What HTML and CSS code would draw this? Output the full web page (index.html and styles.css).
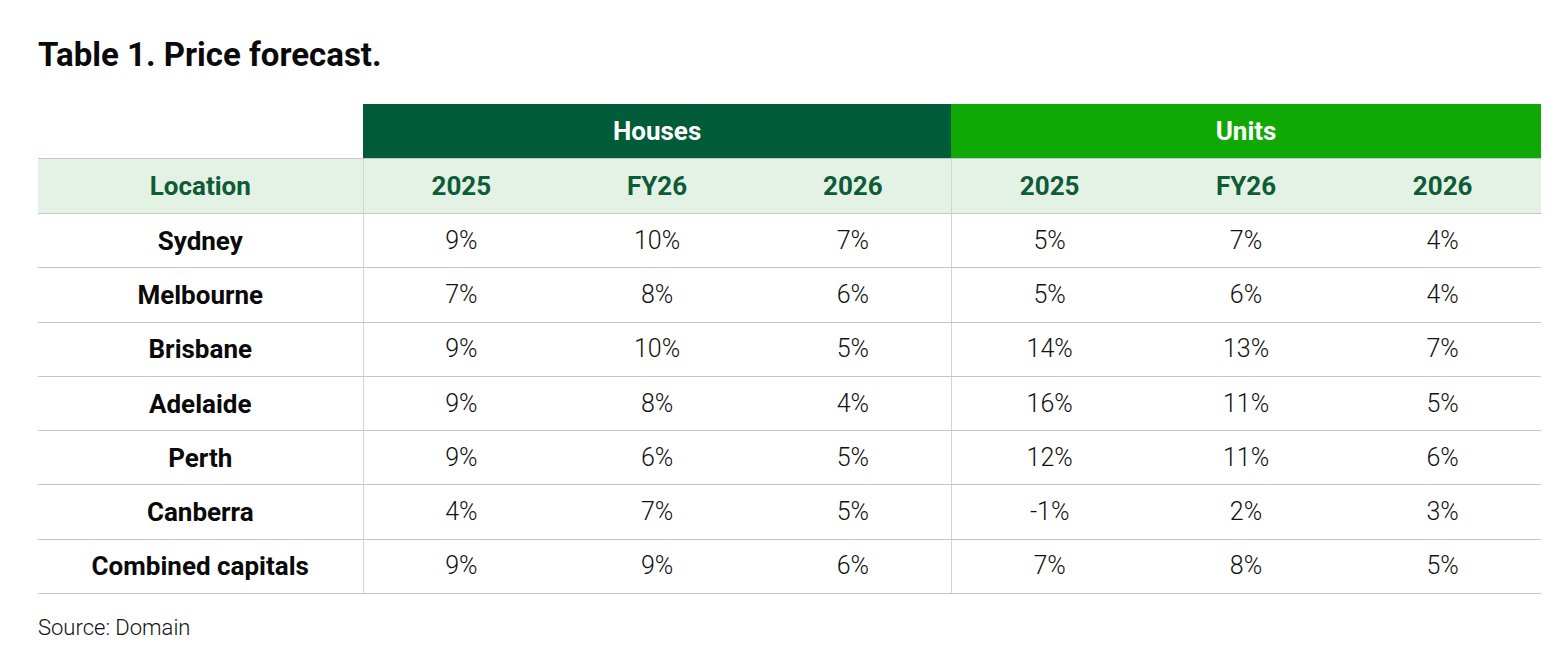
FILE: index.html
```html
<!DOCTYPE html>
<html lang="en">
<head>
<meta charset="utf-8">
<title>Table 1. Price forecast.</title>
<link rel="stylesheet" href="styles.css">
</head>
<body>
<div class="wrap">
  <h2 class="title">Table 1. Price forecast.</h2>
  <table class="forecast">
    <colgroup>
      <col class="c-loc">
      <col class="c-h"><col class="c-h"><col class="c-h">
      <col class="c-u"><col class="c-u"><col class="c-u">
    </colgroup>
    <thead>
      <tr class="group-row">
        <th class="blank"></th>
        <th class="grp houses" colspan="3">Houses</th>
        <th class="grp units" colspan="3">Units</th>
      </tr>
      <tr class="sub-row">
        <th>Location</th>
        <th class="sep">2025</th><th>FY26</th><th>2026</th>
        <th class="sep">2025</th><th>FY26</th><th>2026</th>
      </tr>
    </thead>
    <tbody>
      <tr><th>Sydney</th><td class="sep">9%</td><td>10%</td><td>7%</td><td class="sep">5%</td><td>7%</td><td>4%</td></tr>
      <tr><th>Melbourne</th><td class="sep">7%</td><td>8%</td><td>6%</td><td class="sep">5%</td><td>6%</td><td>4%</td></tr>
      <tr><th>Brisbane</th><td class="sep">9%</td><td>10%</td><td>5%</td><td class="sep">14%</td><td>13%</td><td>7%</td></tr>
      <tr><th>Adelaide</th><td class="sep">9%</td><td>8%</td><td>4%</td><td class="sep">16%</td><td>11%</td><td>5%</td></tr>
      <tr><th>Perth</th><td class="sep">9%</td><td>6%</td><td>5%</td><td class="sep">12%</td><td>11%</td><td>6%</td></tr>
      <tr><th>Canberra</th><td class="sep">4%</td><td>7%</td><td>5%</td><td class="sep">-1%</td><td>2%</td><td>3%</td></tr>
      <tr><th>Combined capitals</th><td class="sep">9%</td><td>9%</td><td>6%</td><td class="sep">7%</td><td>8%</td><td>5%</td></tr>
    </tbody>
  </table>
  <p class="source">Source: Domain</p>
</div>
</body>
</html>
```

FILE: styles.css
```css
html, body {
  margin: 0;
  padding: 0;
  background: #ffffff;
}
body {
  font-family: Roboto, "Liberation Sans", Arial, sans-serif;
  color: #111111;
}
.wrap {
  padding: 34px 27px 0 38px;
}
.title {
  margin: 0;
  font-size: 33px;
  font-weight: 700;
  line-height: 42px;
  color: #0a0a0a;
}
.forecast {
  margin-top: 28px;
  width: 1503px;
  border-collapse: collapse;
  table-layout: fixed;
}
.c-loc { width: 325px; }
.c-h { width: 196px; }
.c-u { width: 196.6px; }
.forecast th,
.forecast td {
  height: 53.3px;
  padding: 0;
  text-align: center;
  vertical-align: middle;
  font-size: 26px;
  line-height: 30px;
  border-bottom: 1px solid #c6c6c6;
}
.forecast td {
  font-weight: 300;
  font-size: 25px;
  color: #111111;
}
.forecast tbody th {
  font-weight: 700;
  color: #0a0a0a;
}
.forecast .sep {
  border-left: 1px solid #d4d4d4;
}
.group-row th {
  height: 54px;
  color: #ffffff;
  font-weight: 700;
}
.group-row .blank {
  background: #ffffff;
}
.group-row .houses {
  background: #005b38;
}
.group-row .units {
  background: #0fa805;
}
.sub-row th {
  height: 54px;
  background: #e4f2e6;
  color: #0d5c35;
  font-weight: 700;
  border-top: 1px solid #c6c6c6;
}
.source {
  margin: 20px 0 0;
  font-size: 22px;
  line-height: 28px;
  font-weight: 300;
  color: #111111;
}
```
